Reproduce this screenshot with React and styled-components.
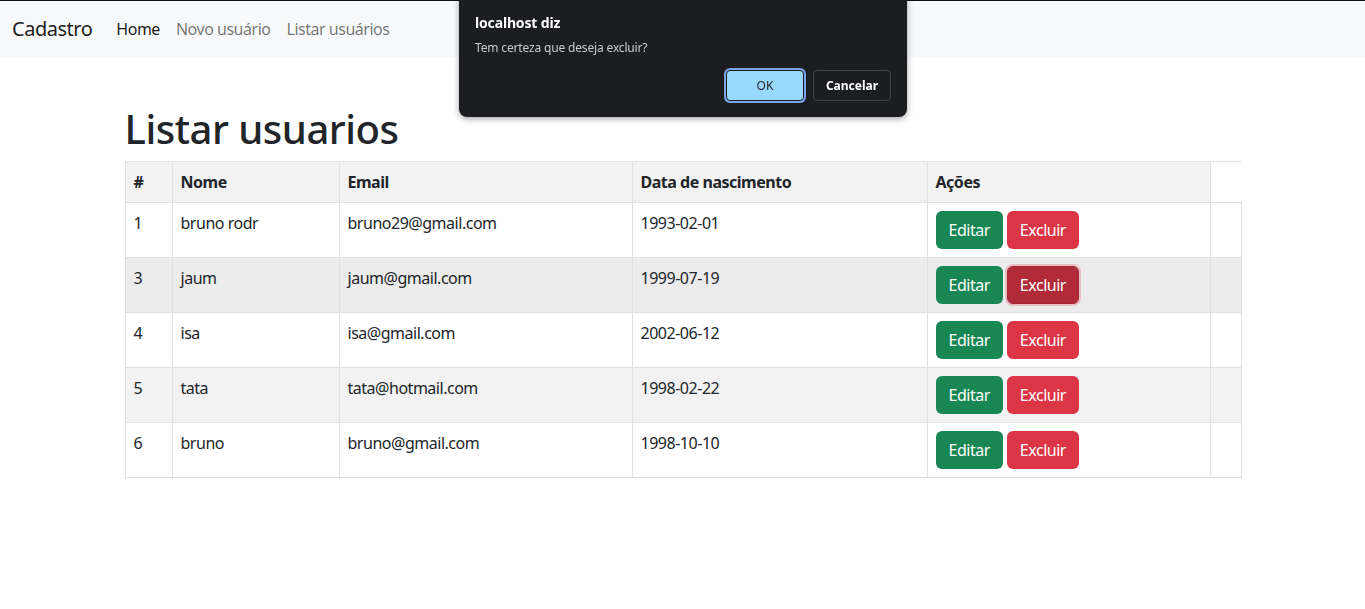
import React from 'react'
import styled, { createGlobalStyle, css } from 'styled-components'

const users = [
  { id: 1, nome: 'bruno rodr', email: 'bruno29@gmail.com', nasc: '1993-02-01', tone: 'plain' },
  { id: 3, nome: 'jaum', email: 'jaum@gmail.com', nasc: '1999-07-19', tone: 'hover', active: true },
  { id: 4, nome: 'isa', email: 'isa@gmail.com', nasc: '2002-06-12', tone: 'plain' },
  { id: 5, nome: 'tata', email: 'tata@hotmail.com', nasc: '1998-02-22', tone: 'stripe' },
  { id: 6, nome: 'bruno', email: 'bruno@gmail.com', nasc: '1998-10-10', tone: 'plain' },
]

const colWidths = [47, 167, 293, 295, 283, 31]

const GlobalStyle = createGlobalStyle`
  * { box-sizing: border-box; }
  body {
    margin: 0;
    font-family: "Noto Sans", "Open Sans", sans-serif;
    font-size: 16px;
    line-height: 1.5;
    letter-spacing: -0.03em;
    color: #212529;
    background: #fff;
  }
`

const Navbar = styled.nav`
  display: flex;
  align-items: center;
  height: 57px;
  padding: 0 12px;
  border-top: 1px solid #111;
  background: #f8f9fa;
`

const Brand = styled.a`
  font-size: 20px;
  color: rgba(0, 0, 0, 0.9);
  margin-right: 16px;
  text-decoration: none;
`

const NavLink = styled.a`
  padding: 8px;
  color: ${p => (p.$active ? 'rgba(0,0,0,.9)' : 'rgba(0,0,0,.55)')};
  text-decoration: none;
`

const Container = styled.main`
  width: 1116px;
  margin: 48px auto 0;
`

const Title = styled.h1`
  margin: 0 0 8px;
  font-size: 40px;
  font-weight: 500;
  line-height: 1.2;
`

const Table = styled.table`
  width: 100%;
  table-layout: fixed;
  border-collapse: collapse;
  border-color: #dee2e6;
`

const rowTones = {
  plain: '#fff',
  hover: '#ececec',
  stripe: '#f2f2f2',
  head: '#f2f2f2',
}

const Row = styled.tr`
  border-top: 1px solid #dee2e6;
  border-bottom: 1px solid #dee2e6;
  background: ${p => rowTones[p.$tone]};
`

const cell = css`
  padding: 8px;
  border-left: 1px solid #dee2e6;
  border-right: 1px solid #dee2e6;
  text-align: left;
  vertical-align: top;
  white-space: nowrap;
`

const Th = styled.th`
  ${cell}
  font-weight: 700;
`

const Td = styled.td`
  ${cell}
  height: 55px;
`

const Button = styled.button`
  font-family: inherit;
  font-size: 16px;
  letter-spacing: inherit;
  line-height: 24px;
  padding: 6px 12px;
  margin-right: 4px;
  border: 1px solid transparent;
  border-radius: 6px;
  color: #fff;
  background: ${p => (p.$variant === 'success' ? '#198754' : '#dc3545')};
  ${p =>
    p.$active &&
    css`
      background: #b02a37;
      border-color: #a52834;
      box-shadow: 0 0 0 2px rgba(225, 83, 97, 0.3);
    `}
`

const Dialog = styled.div`
  position: fixed;
  top: -8px;
  left: 459px;
  width: 448px;
  padding: 21px 16px 16px;
  background: #1b1d21;
  border-radius: 8px;
  box-shadow: 0 2px 6px rgba(0, 0, 0, 0.35);
  font-family: "Noto Sans", sans-serif;
  letter-spacing: -0.01em;
  color: #fff;
`

const DialogTitle = styled.div`
  font-size: 14px;
  font-weight: 700;
  line-height: 20px;
`

const DialogText = styled.div`
  margin-top: 7px;
  font-size: 12px;
  line-height: 16px;
  color: #c8cbcf;
`

const DialogActions = styled.div`
  display: flex;
  justify-content: flex-end;
  gap: 9px;
  margin-top: 14px;
`

const DialogButton = styled.button`
  width: 78px;
  height: 31px;
  font-family: inherit;
  font-size: 12px;
  border-radius: 4px;
  ${p =>
    p.$primary
      ? css`
          background: #99d8ff;
          color: #1f1f1f;
          border: 1px solid #1b1d21;
          box-shadow: 0 0 0 2px #7aa5e8;
        `
      : css`
          background: #1b1d21;
          color: #fff;
          font-weight: 700;
          border: 1px solid #3e4146;
        `}
`

export default function App() {
  return (
    <>
      <GlobalStyle />
      <Navbar>
        <Brand>Cadastro</Brand>
        <NavLink $active>Home</NavLink>
        <NavLink>Novo usuário</NavLink>
        <NavLink>Listar usuários</NavLink>
      </Navbar>
      <Container>
        <Title>Listar usuarios</Title>
        <Table>
          <colgroup>
            {colWidths.map((w, i) => (
              <col key={i} style={{ width: w }} />
            ))}
          </colgroup>
          <thead>
            <Row $tone="head">
              <Th>#</Th>
              <Th>Nome</Th>
              <Th>Email</Th>
              <Th>Data de nascimento</Th>
              <Th>Ações</Th>
            </Row>
          </thead>
          <tbody>
            {users.map(u => (
              <Row key={u.id} $tone={u.tone}>
                <Td>{u.id}</Td>
                <Td>{u.nome}</Td>
                <Td>{u.email}</Td>
                <Td>{u.nasc}</Td>
                <Td>
                  <Button $variant="success">Editar</Button>
                  <Button $variant="danger" $active={u.active}>Excluir</Button>
                </Td>
                <Td />
              </Row>
            ))}
          </tbody>
        </Table>
      </Container>
      <Dialog>
        <DialogTitle>localhost diz</DialogTitle>
        <DialogText>Tem certeza que deseja excluir?</DialogText>
        <DialogActions>
          <DialogButton $primary>OK</DialogButton>
          <DialogButton>Cancelar</DialogButton>
        </DialogActions>
      </Dialog>
    </>
  )
}
